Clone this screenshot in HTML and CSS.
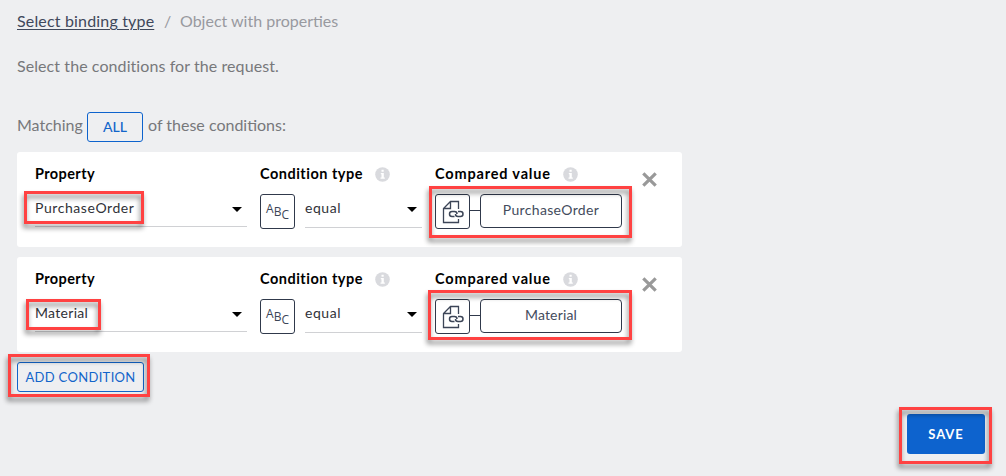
FILE: index.html
```html
<!DOCTYPE html>
<html lang="en">
<head>
<meta charset="utf-8">
<title>Object with properties</title>
<link rel="stylesheet" href="styles.css">
</head>
<body>
<svg class="defs" aria-hidden="true">
  <symbol id="info" viewBox="0 0 15 15"><circle cx="7.5" cy="7.5" r="7.3" fill="#d9dade"/><path d="M5.800 6h3v4.500h1v1.300H5.500v-1.300h1V7.200h-.7zM6.500 2.800h2.200v2H6.500z" fill="#fff"/></symbol>
  <symbol id="close" viewBox="0 0 15 15"><path d="M1.3 1.3l12.4 12.4M13.700 1.300L1.300 13.700" stroke="#999" stroke-width="3.2"/></symbol>
  <symbol id="doc" viewBox="0 0 24 24"><g fill="none" stroke="#3c4557" stroke-width="1.3"><path d="M17.500 9V1.500H9.500L2.500 8.500V22.500H17.500V19M9.500 1.500V8.500H2.500"/><path d="M13.500 16.500H11a2.500 2.500 0 0 1 0-5h2.500a2.500 2.500 0 0 1 2.500 2.500M17 11.500h2.500a2.500 2.500 0 0 1 0 5H17a2.500 2.500 0 0 1-2.500-2.500" stroke-width="1.5"/></g></symbol>
</svg>
<main class="page">
  <nav class="crumbs"><a class="crumb-link">Select binding type</a><span class="slash">/</span><span class="current">Object with properties</span></nav>
  <p class="intro">Select the conditions for the request.</p>
  <div class="matching"><span class="match-word">Matching</span><button class="all">ALL</button><span class="match-rest">of these conditions:</span></div>
  <section class="card">
    <div class="property"><h2 class="label label-property">Property</h2><div class="select"><span class="value-order">PurchaseOrder</span><i class="caret"></i></div></div>
    <div class="condition"><h2 class="label label-condition">Condition type<svg class="info"><use href="#info"/></svg></h2>
      <div class="row"><div class="box abc"><span>A</span><span>B</span><span>C</span></div><div class="select type"><span class="value-equal">equal</span><i class="caret"></i></div></div></div>
    <div class="compared"><h2 class="label label-compared">Compared value<svg class="info"><use href="#info"/></svg></h2>
      <div class="row link"><div class="box"><svg class="doc"><use href="#doc"/></svg></div><i class="wire"></i><div class="pill pill-order">PurchaseOrder</div></div></div>
    <svg class="close"><use href="#close"/></svg>
  </section>
  <section class="card">
    <div class="property"><h2 class="label label-property">Property</h2><div class="select"><span class="value-material">Material</span><i class="caret"></i></div></div>
    <div class="condition"><h2 class="label label-condition">Condition type<svg class="info"><use href="#info"/></svg></h2>
      <div class="row"><div class="box abc"><span>A</span><span>B</span><span>C</span></div><div class="select type"><span class="value-equal">equal</span><i class="caret"></i></div></div></div>
    <div class="compared"><h2 class="label label-compared">Compared value<svg class="info"><use href="#info"/></svg></h2>
      <div class="row link"><div class="box"><svg class="doc"><use href="#doc"/></svg></div><i class="wire"></i><div class="pill pill-material">Material</div></div></div>
    <svg class="close"><use href="#close"/></svg>
  </section>
  <button class="add">ADD CONDITION</button>
  <footer class="footer"><button class="save">SAVE</button></footer>
  <i class="mark mark-property-1"></i><i class="mark mark-property-2"></i>
  <i class="mark mark-value-1"></i><i class="mark mark-value-2"></i>
  <i class="mark mark-add"></i><i class="mark mark-save"></i>
</main>
</body>
</html>
```
FILE: styles.css
```css
* { box-sizing: border-box; }
body { margin: 0; background: #eeeff1; font-family: Lato, "Liberation Sans", sans-serif; }
.defs { position: absolute; width: 0; height: 0; }
.page { position: relative; width: 1006px; height: 476px; overflow: hidden; padding: 10px 21px 0 17px; display: flex; flex-direction: column; align-items: flex-start; color: #77787b; font-size: 16px; line-height: 22px; white-space: nowrap; }
button { font: inherit; padding: 0; white-space: nowrap; }
.crumbs { display: flex; height: 22px; color: #98999f; }
.crumb-link { color: #3f485b; text-decoration: underline; text-underline-offset: 2px; text-decoration-thickness: 1px; width: 137px; letter-spacing: .17px; }
.slash { width: 26px; padding-left: 10px; }
.intro { margin: 23px 0 0; height: 22px; letter-spacing: .08px; }
.matching { display: flex; align-items: center; margin-top: 35px; height: 30px; }
.match-word { width: 70px; margin-top: -4px; }
.match-rest { margin: -4px 0 0 5px; }
.all { width: 56px; height: 30px; border: 1px solid #0d63cd; border-radius: 3px; background: transparent; color: #1265ca; font-size: 14px; font-weight: 500; }
.card { display: flex; width: 665px; height: 95px; margin-top: 10px; padding: 11px 0 0 18px; border-radius: 3px; background: #fff; color: #303238; font-size: 14px; }
.property { width: 225px; }
.condition { width: 175px; }
.compared { width: 207px; }
.label { display: flex; align-items: center; height: 22px; margin: 0; color: #000; font-size: 14.5px; font-weight: 700; }
.label-property { letter-spacing: .4px; }
.label-condition { letter-spacing: .5px; }
.label-compared { letter-spacing: .83px; }
.info { width: 15px; height: 15px; margin-left: 12px; }
.select { display: flex; align-items: flex-start; justify-content: space-between; width: 212px; height: 42px; padding: 13px 5px 0 0; border-bottom: 1px solid #d0d1d4; }
.select span { margin-top: -1px; }
.select .value-equal { margin-top: 0; letter-spacing: .55px; }
.value-order { letter-spacing: .57px; }
.value-material { letter-spacing: .3px; }
.caret { width: 10px; height: 5px; margin-top: 9px; background: #000; clip-path: polygon(0 0, 100% 0, 50% 100%); }
.row { display: flex; align-items: center; height: 35px; margin-top: 9px; }
.box { display: flex; align-items: center; justify-content: center; width: 35px; height: 35px; border: 1px solid #30394b; border-radius: 3px; }
.abc { gap: 0; color: #3c4557; font: 12px/14px "Open Sans", sans-serif; }
.abc span:nth-child(1) { margin-top: -6px; }
.abc span:nth-child(3) { margin-top: 7px; }
.type { width: 117px; height: 35px; padding-top: 4px; margin: -2px 0 0 10px; }
.type .caret { margin-top: 10px; }
.wire { width: 10px; height: 1px; margin-top: -2px; background: #30394b; }
.pill { width: 142px; height: 34px; margin-top: -1px; border: 1px solid #30394b; border-radius: 4px; text-align: center; line-height: 30px; color: #444c5d; }
.pill-order { letter-spacing: .34px; }
.pill-material { letter-spacing: .15px; }
.doc { width: 24px; height: 24px; }
.close { width: 15px; height: 15px; margin-top: 9px; }
.add { width: 127px; height: 30px; margin-top: 10px; border: 1px solid #1265ca; border-radius: 3px; background: transparent; color: #1265ca; font-size: 13px; letter-spacing: .33px; }
.footer { display: flex; justify-content: flex-end; width: 100%; margin-top: 22px; }
.save { width: 78px; height: 40px; border: 0; border-radius: 3px; background: #0d63ce; color: #fff; font-size: 13px; font-weight: 700; letter-spacing: .9px; }
.mark { position: absolute; border: 3px solid #ff4242; filter: drop-shadow(-1px 4px 2.5px rgba(0,0,0,.48)); }
.mark-property-1 { left: 24px; top: 191px; width: 120px; height: 33px; }
.mark-property-2 { left: 26px; top: 299px; width: 75px; height: 31px; }
.mark-value-1 { left: 429px; top: 186px; width: 203px; height: 52px; }
.mark-value-2 { left: 428px; top: 290px; width: 204px; height: 50px; }
.mark-add { left: 8px; top: 354px; width: 142px; height: 43px; }
.mark-save { left: 899px; top: 407px; width: 93px; height: 57px; }
```
